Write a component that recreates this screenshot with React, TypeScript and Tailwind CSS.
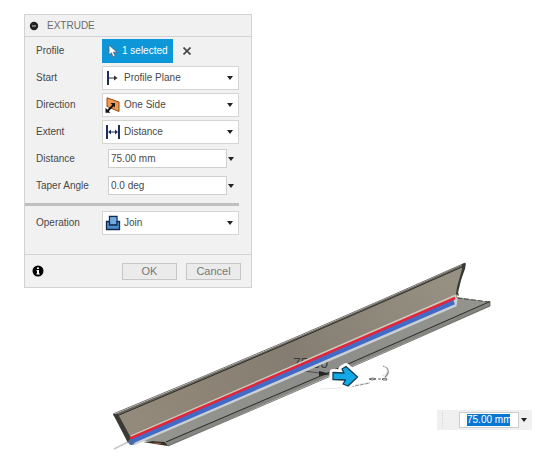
import React from "react";

function Caret() {
  return (
    <svg className="pointer-events-none absolute right-[5px] h-1 w-1.5" viewBox="0 0 6 4" aria-hidden="true">
      <path d="M0 0h6L3 4z" fill="#222" />
    </svg>
  );
}

function StartIcon() {
  return (
    <svg className="h-4 w-4" viewBox="0 0 16 16" aria-hidden="true">
      <path d="M3 1v14" stroke="#20305a" strokeWidth="2" />
      <path d="M4 8h6" stroke="#333" strokeWidth="1" />
      <path d="M9 5.500 12.500 8 9 10.500z" fill="#333" />
    </svg>
  );
}

function DirectionIcon() {
  return (
    <svg className="h-4 w-4" viewBox="0 0 16 16" aria-hidden="true">
      <path d="M2 .8 14 5v9.500L2 9.500z" fill="#f5994f" stroke="#8c4a1c" strokeWidth="1" />
      <path d="m2 14.500 6.500-6.500" stroke="#151515" strokeWidth="2" />
      <path d="M.5 15.800v-5l5 5zM10 6v4.500L5.500 6z" fill="#151515" />
    </svg>
  );
}

function ExtentIcon() {
  return (
    <svg className="h-4 w-4" viewBox="0 0 16 16" aria-hidden="true">
      <path d="M2 1v14M14 1v14" stroke="#20305a" strokeWidth="2" />
      <path d="M4 8h8" stroke="#20305a" strokeWidth="1" />
      <path d="M3 8l3-2.500v5zM13 8l-3-2.500v5z" fill="#20305a" />
    </svg>
  );
}

function JoinIcon() {
  return (
    <svg className="h-4 w-4" viewBox="0 0 16 16" aria-hidden="true">
      <path d="M4.500 1.500h7.500v5h2.500v8h-13v-8h3z" fill="#4c8ecd" stroke="#112a4c" strokeWidth="1.300" />
      <path d="M5.200 2.200h6.100v7H5.200z" fill="#72a9dc" />
      <path d="M4.500 6.500v3.500H12V6.500" fill="none" stroke="#112a4c" strokeWidth="1.300" />
    </svg>
  );
}

function Row({ id, label, children }: { id: string; label: string; children: React.ReactNode }) {
  return (
    <div className="flex h-[27px] items-center pr-3 pl-[11px]">
      <label htmlFor={id} className="w-[66px] shrink-0">
        {label}
      </label>
      {children}
    </div>
  );
}

function SelectField({ id, label, value, icon }: { id: string; label: string; value: string; icon: React.ReactNode }) {
  return (
    <Row id={id} label={label}>
      <div className="relative flex h-6 min-w-0 flex-1 items-center border border-[#d5d5d5] bg-white pl-0.5">
        {icon}
        <select id={id} className="h-full min-w-0 flex-1 appearance-none bg-transparent pl-[3px] outline-none">
          <option>{value}</option>
        </select>
        <Caret />
      </div>
    </Row>
  );
}

function ValueField({ id, label, value }: { id: string; label: string; value: string }) {
  return (
    <Row id={id} label={label}>
      <div className="relative flex min-w-0 flex-1 items-center pr-3 pl-1.5">
        <input id={id} defaultValue={value} className="h-[19px] w-full border border-[#cfcfcf] bg-white px-0.5 outline-none" />
        <Caret />
      </div>
    </Row>
  );
}

function ExtrudePanel() {
  return (
    <form className="w-[228px] border border-[#d2d2d2] bg-[#f1f1f1]">
      <header className="flex h-[22px] items-center gap-2 border-b border-[#d2d2d2] pl-1 text-[#6b6b6b]">
        <svg className="h-2.5 w-2.5" viewBox="0 0 10 10" aria-hidden="true">
          <circle cx="5" cy="5" r="4.200" fill="#222" />
          <path d="M3 5h4" stroke="#ccc" />
        </svg>
        <h1>EXTRUDE</h1>
      </header>
      <Row id="profile" label="Profile">
        <button id="profile" type="button" className="flex h-6 w-[71px] items-center gap-1 bg-[#0e97d8] pl-1.5 font-medium text-white">
          <svg className="h-3.5 w-2.5" viewBox="0 0 10 14" aria-hidden="true">
            <path d="M1 1v10l2.400-2.200L5.200 13l2-1-1.900-3.800H9z" fill="#fff" stroke="#52616d" strokeWidth=".8" />
          </svg>
          1 selected
        </button>
        <button type="button" aria-label="Clear selection" className="ml-2.5">
          <svg className="h-2 w-2" viewBox="0 0 8 8" aria-hidden="true">
            <path d="m.5.5 7 7M7.500.5l-7 7" stroke="#444" strokeWidth="1.600" />
          </svg>
        </button>
      </Row>
      <SelectField id="start" label="Start" value="Profile Plane" icon={<StartIcon />} />
      <SelectField id="direction" label="Direction" value="One Side" icon={<DirectionIcon />} />
      <SelectField id="extent" label="Extent" value="Distance" icon={<ExtentIcon />} />
      <ValueField id="distance" label="Distance" value="75.00 mm" />
      <ValueField id="taper" label="Taper Angle" value="0.0 deg" />
      <hr className="mt-1 mr-3 mb-[3px] border-t-[3px] border-[#c0c0c0]" />
      <SelectField id="operation" label="Operation" value="Join" icon={<JoinIcon />} />
      <footer className="mt-[18px] flex h-[33px] items-center border-t border-[#d2d2d2] pr-2.5 pl-[7px] text-[11px] text-[#777]">
        <svg className="mr-auto h-3 w-3" viewBox="0 0 12 12" aria-label="Information">
          <circle cx="6" cy="6" r="5.500" fill="#000" />
          <path d="M5 2.500h2v1.500H5zM4.500 5H7v3.500h.8v1H4.300v-1H5V6h-.5z" fill="#fff" />
        </svg>
        <div className="flex gap-[9px]">
          <button type="button" className="h-[17px] w-[55px] border border-[#c6c6c6] bg-[#ebebeb]">OK</button>
          <button type="button" className="h-[17px] w-[55px] border border-[#c6c6c6] bg-[#ebebeb]">Cancel</button>
        </div>
      </footer>
    </form>
  );
}

function AngleModel() {
  return (
    <svg className="pointer-events-none absolute top-[256px] left-[108px] h-[200px] w-[390px]" viewBox="108 256 390 200" role="img" aria-label="Angle profile extrusion">
      <defs>
        <linearGradient id="upper" x1="120" y1="430" x2="460" y2="280" gradientUnits="userSpaceOnUse">
          <stop offset="0" stopColor="#958b7c" />
          <stop offset=".5" stopColor="#857d71" />
          <stop offset="1" stopColor="#979184" />
        </linearGradient>
        <linearGradient id="lower" x1="140" y1="440" x2="470" y2="300" gradientUnits="userSpaceOnUse">
          <stop offset="0" stopColor="#969690" />
          <stop offset=".5" stopColor="#8c8c8a" />
          <stop offset="1" stopColor="#93948e" />
        </linearGradient>
      </defs>
      <path d="M114 449 132 440" stroke="#c7c7c7" strokeWidth="1.500" />
      <path d="M131 440 457 297 490 302V306L167 446 163 442z" fill="url(#lower)" />
      <path d="M166 441 Q330 372 490 301V306L168 446z" fill="#858581" />
      <path d="M166 442 Q330 373 490 301.500" fill="none" stroke="#2d2d2b" />
      <path d="M168 446 Q335 375 490 306V301.500" fill="none" stroke="#565652" strokeWidth=".8" />
      <path d="M457 298 490 302" stroke="#343431" strokeWidth=".8" strokeDasharray="5 2" />
      <path d="m143 442 10-1 12 1 3 4-13-2z" fill="#34322d" />
      <path d="m154 443 7 .8" stroke="#a45b35" />
      <path d="M113 415 Q300 338 465 264L457 297 131 439z" fill="url(#upper)" />
      <path d="M113 415 Q300 338 465 263.500L462 267Q300 339 118 415.500z" fill="#67655d" />
      <path d="M118 415.500 Q300 339 462 267" fill="none" stroke="#30302c" />
      <path d="M113 414 Q300 337 465 263" fill="none" stroke="#4e4d47" strokeWidth=".8" />
      <path d="M113 414h5l13 24-3 5z" fill="#3b3933" />
      <path d="m462 264 4-1-1 6-4 11-3 12 1 4-3-2 1-7 5-18z" fill="#3a3a34" />
      <text x="293" y="368" className="font-['Liberation_Sans',sans-serif] text-[14px]" fill="#373936">75.00</text>
      <path d="M304 371 327 374" stroke="#4c4c49" />
      <path d="m319 371 12 3-12 2z" fill="#252525" />
      <path d="M131 437 456 296" stroke="#d1c9bb" strokeWidth="3" />
      <path d="M133 444 455 305 456 298" fill="none" stroke="#cbcfd0" strokeWidth="3.500" />
      <path d="M131 441.500 454 302" stroke="#426bc8" strokeWidth="5" />
      <path d="M130 438.500 455 298" stroke="#df263d" strokeWidth="2.500" />
      <circle cx="131.500" cy="442" r="3" fill="#486ba7" />
      <path d="m320 389 20-1 30-6" fill="none" stroke="#ddd" strokeWidth=".7" />
      <path d="m350 387 20-4" stroke="#777" strokeDasharray="4 1" strokeWidth=".8" />
      <path d="M383 366c6 2 7 7 2 11" fill="none" stroke="#888" strokeWidth="1.300" />
      <path d="M384 366c4 3 5 7-2 10" fill="none" stroke="#ddd" />
      <path d="m369 379 4-1 3 1-4 1zm9 0h3m1 0 4-1 1 2-4 0z" fill="#fff" stroke="#444" strokeWidth=".8" />
      <path d="M333 372.500 344 373 342 369 346 366.500 357.500 377 348 386 343 384 345.500 380 333 379.500z" fill="#12a9e6" stroke="#fff" strokeWidth="7" strokeLinejoin="round" />
      <path d="M333 372.500 344 373 342 369 346 366.500 357.500 377 348 386 343 384 345.500 380 333 379.500z" fill="#12a9e6" stroke="#123c51" strokeWidth="1.300" strokeLinejoin="round" />
    </svg>
  );
}

function FloatingValue() {
  return (
    <div className="absolute top-[410px] left-[437px] flex h-5 w-[95px] items-center bg-[#f0f0f0]">
      <span className="h-4 w-1.5 border-r border-dotted border-[#d4d4d4]" />
      <div className="ml-4 flex h-4 w-[60px] items-center border border-[#ccc] bg-white pl-[7px]">
        <input aria-label="Extrusion distance" defaultValue="75.00 mm" className="h-3 w-[43px] bg-[#0877d1] text-white outline-none" />
      </div>
      <Caret />
    </div>
  );
}

export default function App() {
  return (
    <main className="relative min-h-screen overflow-hidden bg-white pt-3.5 pl-6 font-['Liberation_Sans',Arial,sans-serif] text-[10px] leading-3 text-[#484848]">
      <AngleModel />
      <ExtrudePanel />
      <FloatingValue />
    </main>
  );
}
